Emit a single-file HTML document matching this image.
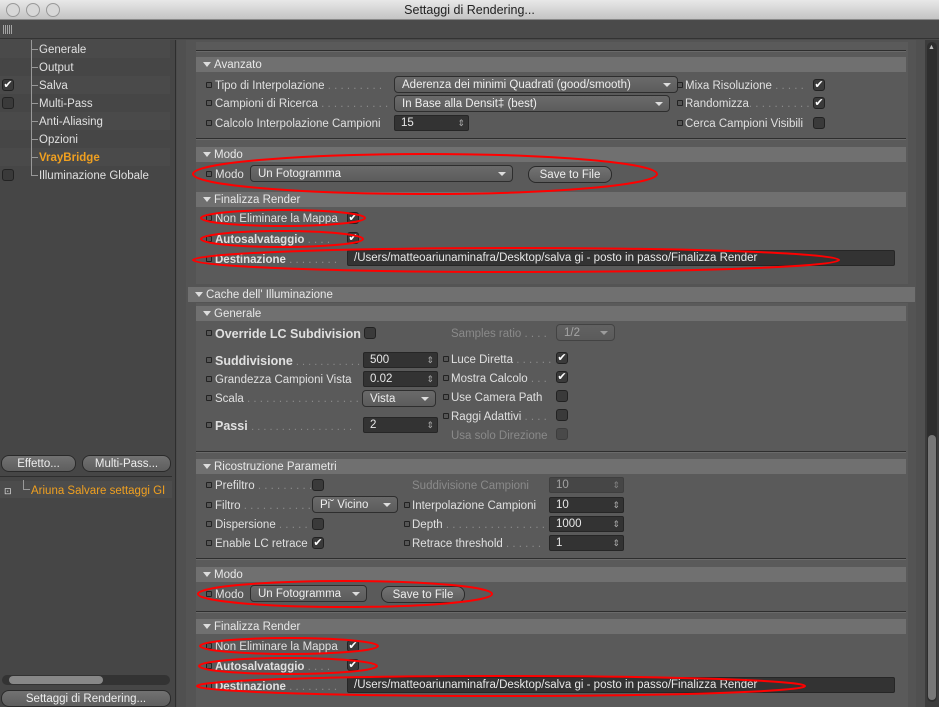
<!DOCTYPE html>
<html><head><meta charset="utf-8">
<style>
*{margin:0;padding:0;box-sizing:border-box}
body{width:939px;height:707px;overflow:hidden;background:#4b4b4b;font-family:"Liberation Sans",sans-serif;font-size:11.5px;color:#e0e0e0;position:relative}
.a{position:absolute;white-space:nowrap}
.t{position:absolute;white-space:nowrap;line-height:14px;margin-top:1px}
.b{font-weight:bold}
.h{position:absolute;background:#707070;height:15px;color:#e8e8e8;line-height:16px;padding-left:18px}
.h:before{content:"";position:absolute;left:7px;top:5px;border-left:4px solid transparent;border-right:4px solid transparent;border-top:5px solid #ddd}
.ln{position:absolute;height:2px;border-top:1px solid #2e2e2e;border-bottom:1px solid #6a6a6a}
.dot{position:absolute;width:6px;height:6px;border:1px solid #222;background:#555;border-radius:1px}
.fld{position:absolute;background:#333;border:1px solid #262626;border-radius:2px;height:16px;line-height:15px;padding-left:6px;color:#e8e8e8}
.fld.sp:after{content:"⇕";position:absolute;right:3px;top:0;font-size:9px;color:#aaa}
.dd{position:absolute;background:linear-gradient(#6a6a6a,#5c5c5c);border:1px solid #2e2e2e;border-radius:4px;height:17px;line-height:16px;padding-left:7px;color:#eee}
.dd:after{content:"";position:absolute;right:6px;top:6px;border-left:4px solid transparent;border-right:4px solid transparent;border-top:4px solid #ddd}
.cb{position:absolute;width:12px;height:12px;background:#3a3a3a;border:1px solid #222;border-radius:3px;color:#fff;font-size:11px;line-height:10px;text-align:center}
.btn{position:absolute;background:linear-gradient(#727272,#5e5e5e);border:1px solid #2a2a2a;border-radius:8px;height:17px;line-height:16px;text-align:center;color:#eee}
.dim{color:#8a8a8a}
.row{position:absolute;left:0;width:170px;height:18px}
.hl{position:absolute;left:31px;width:7px;height:1px;background:#999}
</style></head><body>
<div class="a" style="left:0;top:0;width:939px;height:20px;background:linear-gradient(#e8e8e8,#c4c4c4);border-bottom:1px solid #888;color:#222;font-size:12.5px;text-align:center;line-height:20px">Settaggi di Rendering...</div>
<div class="a" style="left:6px;top:3px;width:14px;height:14px;border-radius:7px;background:#d8d8d8;border:1px solid #999"></div>
<div class="a" style="left:26px;top:3px;width:14px;height:14px;border-radius:7px;background:#d8d8d8;border:1px solid #999"></div>
<div class="a" style="left:46px;top:3px;width:14px;height:14px;border-radius:7px;background:#d8d8d8;border:1px solid #999"></div>
<div class="a" style="left:0;top:21px;width:939px;height:18px;background:#4a4a4a;border-bottom:1px solid #333"></div>
<div class="a" style="left:3px;top:25px;width:10px;height:9px;background:repeating-linear-gradient(90deg,#ccc 0 1px,transparent 1px 2px);opacity:.7"></div>

<div class="a" style="left:0;top:40px;width:176px;height:667px;background:#464646;border-right:1px solid #2e2e2e"></div>
<div class="row" style="top:40px;background:#4a4a4a"></div>
<div class="row" style="top:76px;background:#4a4a4a"></div>
<div class="row" style="top:112px;background:#4a4a4a"></div>
<div class="row" style="top:148px;background:#4a4a4a"></div>
<div class="a" style="left:31px;top:40px;width:1px;height:135px;background:#999"></div>
<div class="hl" style="top:49px"></div><div class="hl" style="top:67px"></div><div class="hl" style="top:85px"></div><div class="hl" style="top:103px"></div><div class="hl" style="top:121px"></div><div class="hl" style="top:139px"></div><div class="hl" style="top:157px"></div><div class="hl" style="top:175px"></div>
<div class="t" style="left:39px;top:42px">Generale</div>
<div class="t" style="left:39px;top:60px">Output</div>
<div class="t" style="left:39px;top:78px">Salva</div>
<div class="t" style="left:39px;top:96px">Multi-Pass</div>
<div class="t" style="left:39px;top:114px">Anti-Aliasing</div>
<div class="t" style="left:39px;top:132px">Opzioni</div>
<div class="t b" style="left:39px;top:150px;color:#f0a020">VrayBridge</div>
<div class="t" style="left:39px;top:168px">Illuminazione Globale</div>
<div class="cb" style="left:2px;top:79px">✔</div>
<div class="cb" style="left:2px;top:97px"></div>
<div class="cb" style="left:2px;top:169px"></div>
<div class="btn" style="left:1px;top:455px;width:75px">Effetto...</div>
<div class="btn" style="left:82px;top:455px;width:89px">Multi-Pass...</div>
<div class="a" style="left:0;top:476px;width:172px;height:1px;background:#2e2e2e"></div>
<div class="a" style="left:0;top:481px;width:172px;height:17px;background:#4c4c4c"></div>
<div class="t" style="left:4px;top:483px;font-size:9px">⊡</div>
<div class="a" style="left:23px;top:480px;width:1px;height:9px;background:#999"></div>
<div class="a" style="left:23px;top:489px;width:7px;height:1px;background:#999"></div>
<div class="t" style="left:31px;top:483px;color:#f0a020">Ariuna Salvare settaggi GI</div>
<div class="a" style="left:2px;top:675px;width:168px;height:10px;background:#333;border-radius:5px"></div>
<div class="a" style="left:9px;top:676px;width:94px;height:8px;background:#888;border-radius:4px"></div>
<div class="btn" style="left:1px;top:690px;width:170px">Settaggi di Rendering...</div>

<div class="a" style="left:177px;top:40px;width:748px;height:667px;background:#505050"></div>
<div class="a" style="left:186px;top:40px;width:730px;height:667px;background:#545454"></div>
<div class="a" style="left:196px;top:42px;width:712px;height:242px;background:#5a5a5a"></div>
<div class="ln" style="left:196px;top:50px;width:710px"></div>
<div class="h" style="left:196px;top:57px;width:710px">Avanzato</div>
<div class="dot" style="left:206px;top:82px"></div><div class="t" style="left:215px;top:78px">Tipo di Interpolazione <span class="dim">. . . . . . . . .</span></div>
<div class="dot" style="left:206px;top:100px"></div><div class="t" style="left:215px;top:96px">Campioni di Ricerca <span class="dim">. . . . . . . . . . .</span></div>
<div class="dot" style="left:206px;top:120px"></div><div class="t" style="left:215px;top:116px">Calcolo Interpolazione Campioni</div>
<div class="dd" style="left:394px;top:76px;width:284px">Aderenza dei minimi Quadrati (good/smooth)</div>
<div class="dd" style="left:394px;top:95px;width:276px">In Base alla Densit‡ (best)</div>
<div class="fld sp" style="left:394px;top:115px;width:75px">15</div>
<div class="dot" style="left:677px;top:82px"></div><div class="t" style="left:685px;top:78px">Mixa Risoluzione <span class="dim">. . . . .</span></div>
<div class="dot" style="left:677px;top:100px"></div><div class="t" style="left:685px;top:96px">Randomizza<span class="dim">. . . . . . . . . .</span></div>
<div class="dot" style="left:677px;top:120px"></div><div class="t" style="left:685px;top:116px">Cerca Campioni Visibili</div>
<div class="cb" style="left:813px;top:79px">✔</div>
<div class="cb" style="left:813px;top:97px">✔</div>
<div class="cb" style="left:813px;top:117px"></div>
<div class="ln" style="left:196px;top:138px;width:710px"></div>
<div class="h" style="left:196px;top:147px;width:710px">Modo</div>
<div class="dot" style="left:206px;top:171px"></div><div class="t" style="left:215px;top:167px">Modo</div>
<div class="dd" style="left:250px;top:165px;width:263px">Un Fotogramma</div>
<div class="btn" style="left:528px;top:166px;width:84px">Save to File</div>
<div class="h" style="left:196px;top:192px;width:710px">Finalizza Render</div>
<div class="dot" style="left:206px;top:215px"></div><div class="t" style="left:215px;top:211px">Non Eliminare la Mappa</div>
<div class="cb" style="left:347px;top:212px">✔</div>
<div class="dot" style="left:206px;top:236px"></div><div class="t b" style="left:215px;top:232px">Autosalvataggio <span class="dim" style="font-weight:normal">. . . .</span></div>
<div class="cb" style="left:347px;top:232px">✔</div>
<div class="dot" style="left:206px;top:256px"></div><div class="t b" style="left:215px;top:252px">Destinazione<span class="dim" style="font-weight:normal"> . . . . . . . .</span></div>
<div class="fld" style="left:347px;top:250px;width:548px">/Users/matteoariunaminafra/Desktop/salva gi - posto in passo/Finalizza Render</div>

<div class="h" style="left:188px;top:287px;width:727px">Cache dell' Illuminazione</div>
<div class="a" style="left:196px;top:303px;width:712px;height:404px;background:#5a5a5a"></div>
<div class="h" style="left:196px;top:306px;width:710px">Generale</div>
<div class="dot" style="left:206px;top:330px"></div><div class="t b" style="left:215px;top:326px;font-size:12.5px">Override LC Subdivision</div>
<div class="cb" style="left:364px;top:327px"></div>
<div class="t dim" style="left:451px;top:326px">Samples ratio <span>. . . .</span></div>
<div class="dd" style="left:556px;top:324px;width:59px;opacity:.5">1/2</div>
<div class="dot" style="left:206px;top:357px"></div><div class="t b" style="left:215px;top:353px;font-size:12.5px">Suddivisione<span class="dim" style="font-weight:normal;font-size:11px"> . . . . . . . . . . .</span></div>
<div class="dot" style="left:206px;top:376px"></div><div class="t" style="left:215px;top:372px">Grandezza Campioni Vista</div>
<div class="dot" style="left:206px;top:395px"></div><div class="t" style="left:215px;top:391px">Scala <span class="dim">. . . . . . . . . . . . . . . . . . .</span></div>
<div class="dot" style="left:206px;top:422px"></div><div class="t b" style="left:215px;top:418px;font-size:12.5px">Passi <span class="dim" style="font-weight:normal;font-size:11px">. . . . . . . . . . . . . . . . .</span></div>
<div class="fld sp" style="left:363px;top:352px;width:75px">500</div>
<div class="fld sp" style="left:363px;top:371px;width:75px">0.02</div>
<div class="dd" style="left:362px;top:390px;width:74px">Vista</div>
<div class="fld sp" style="left:363px;top:417px;width:75px">2</div>
<div class="dot" style="left:443px;top:356px"></div><div class="t" style="left:451px;top:352px">Luce Diretta <span class="dim">. . . . . .</span></div>
<div class="dot" style="left:443px;top:375px"></div><div class="t" style="left:451px;top:371px">Mostra Calcolo <span class="dim">. . .</span></div>
<div class="dot" style="left:443px;top:394px"></div><div class="t" style="left:451px;top:390px">Use Camera Path</div>
<div class="dot" style="left:443px;top:413px"></div><div class="t" style="left:451px;top:409px">Raggi Adattivi <span class="dim">. . . .</span></div>
<div class="t dim" style="left:451px;top:428px">Usa solo Direzione</div>
<div class="cb" style="left:556px;top:352px">✔</div>
<div class="cb" style="left:556px;top:371px">✔</div>
<div class="cb" style="left:556px;top:390px"></div>
<div class="cb" style="left:556px;top:409px"></div>
<div class="cb" style="left:556px;top:428px;opacity:.5"></div>
<div class="ln" style="left:196px;top:451px;width:710px"></div>
<div class="h" style="left:196px;top:459px;width:710px">Ricostruzione Parametri</div>
<div class="dot" style="left:206px;top:482px"></div><div class="t" style="left:215px;top:478px">Prefiltro <span class="dim">. . . . . . . . .</span></div>
<div class="dot" style="left:206px;top:502px"></div><div class="t" style="left:215px;top:498px">Filtro <span class="dim">. . . . . . . . . . .</span></div>
<div class="dot" style="left:206px;top:521px"></div><div class="t" style="left:215px;top:517px">Dispersione <span class="dim">. . . . .</span></div>
<div class="dot" style="left:206px;top:540px"></div><div class="t" style="left:215px;top:536px">Enable LC retrace</div>
<div class="cb" style="left:312px;top:479px"></div>
<div class="dd" style="left:312px;top:496px;width:86px">Pi˘ Vicino</div>
<div class="cb" style="left:312px;top:518px"></div>
<div class="cb" style="left:312px;top:537px">✔</div>
<div class="t dim" style="left:412px;top:478px">Suddivisione Campioni</div>
<div class="dot" style="left:404px;top:502px"></div><div class="t" style="left:412px;top:498px">Interpolazione Campioni</div>
<div class="dot" style="left:404px;top:521px"></div><div class="t" style="left:412px;top:517px">Depth <span class="dim">. . . . . . . . . . . . . . . .</span></div>
<div class="dot" style="left:404px;top:540px"></div><div class="t" style="left:412px;top:536px">Retrace threshold <span class="dim">. . . . . .</span></div>
<div class="fld sp" style="left:549px;top:477px;width:75px;opacity:.5">10</div>
<div class="fld sp" style="left:549px;top:497px;width:75px">10</div>
<div class="fld sp" style="left:549px;top:516px;width:75px">1000</div>
<div class="fld sp" style="left:549px;top:535px;width:75px">1</div>
<div class="ln" style="left:196px;top:558px;width:710px"></div>
<div class="h" style="left:196px;top:567px;width:710px">Modo</div>
<div class="dot" style="left:206px;top:591px"></div><div class="t" style="left:215px;top:587px">Modo</div>
<div class="dd" style="left:250px;top:585px;width:117px">Un Fotogramma</div>
<div class="btn" style="left:381px;top:586px;width:84px">Save to File</div>
<div class="ln" style="left:196px;top:611px;width:710px"></div>
<div class="h" style="left:196px;top:619px;width:710px">Finalizza Render</div>
<div class="dot" style="left:206px;top:643px"></div><div class="t" style="left:215px;top:639px">Non Eliminare la Mappa</div>
<div class="cb" style="left:347px;top:640px">✔</div>
<div class="dot" style="left:206px;top:663px"></div><div class="t b" style="left:215px;top:659px">Autosalvataggio <span class="dim" style="font-weight:normal">. . . .</span></div>
<div class="cb" style="left:347px;top:659px">✔</div>
<div class="dot" style="left:206px;top:683px"></div><div class="t b" style="left:215px;top:679px">Destinazione<span class="dim" style="font-weight:normal"> . . . . . . . .</span></div>
<div class="fld" style="left:347px;top:677px;width:548px">/Users/matteoariunaminafra/Desktop/salva gi - posto in passo/Finalizza Render</div>

<div class="a" style="left:925px;top:40px;width:14px;height:667px;background:#3c3c3c"></div>
<div class="a" style="left:927px;top:42px;width:10px;height:660px;background:#2e2e2e;border-radius:5px"></div>
<div class="a" style="left:928px;top:435px;width:8px;height:265px;background:#777;border-radius:4px"></div>
<div class="a" style="left:928px;top:44px;font-size:7px;color:#bbb">▲</div>

<svg class="a" style="left:0;top:0" width="939" height="707">
<g fill="none" stroke="#ff0000" stroke-width="2">
<ellipse cx="425" cy="174" rx="232" ry="20"/>
<ellipse cx="283" cy="218" rx="82" ry="8"/>
<ellipse cx="282" cy="239" rx="81" ry="8"/>
<ellipse cx="516" cy="260" rx="323" ry="12"/>
<ellipse cx="345" cy="594" rx="147" ry="13"/>
<ellipse cx="289" cy="646" rx="89" ry="8"/>
<ellipse cx="288" cy="666" rx="89" ry="8"/>
<ellipse cx="501" cy="686" rx="304" ry="10"/>
</g></svg>
</body></html>
